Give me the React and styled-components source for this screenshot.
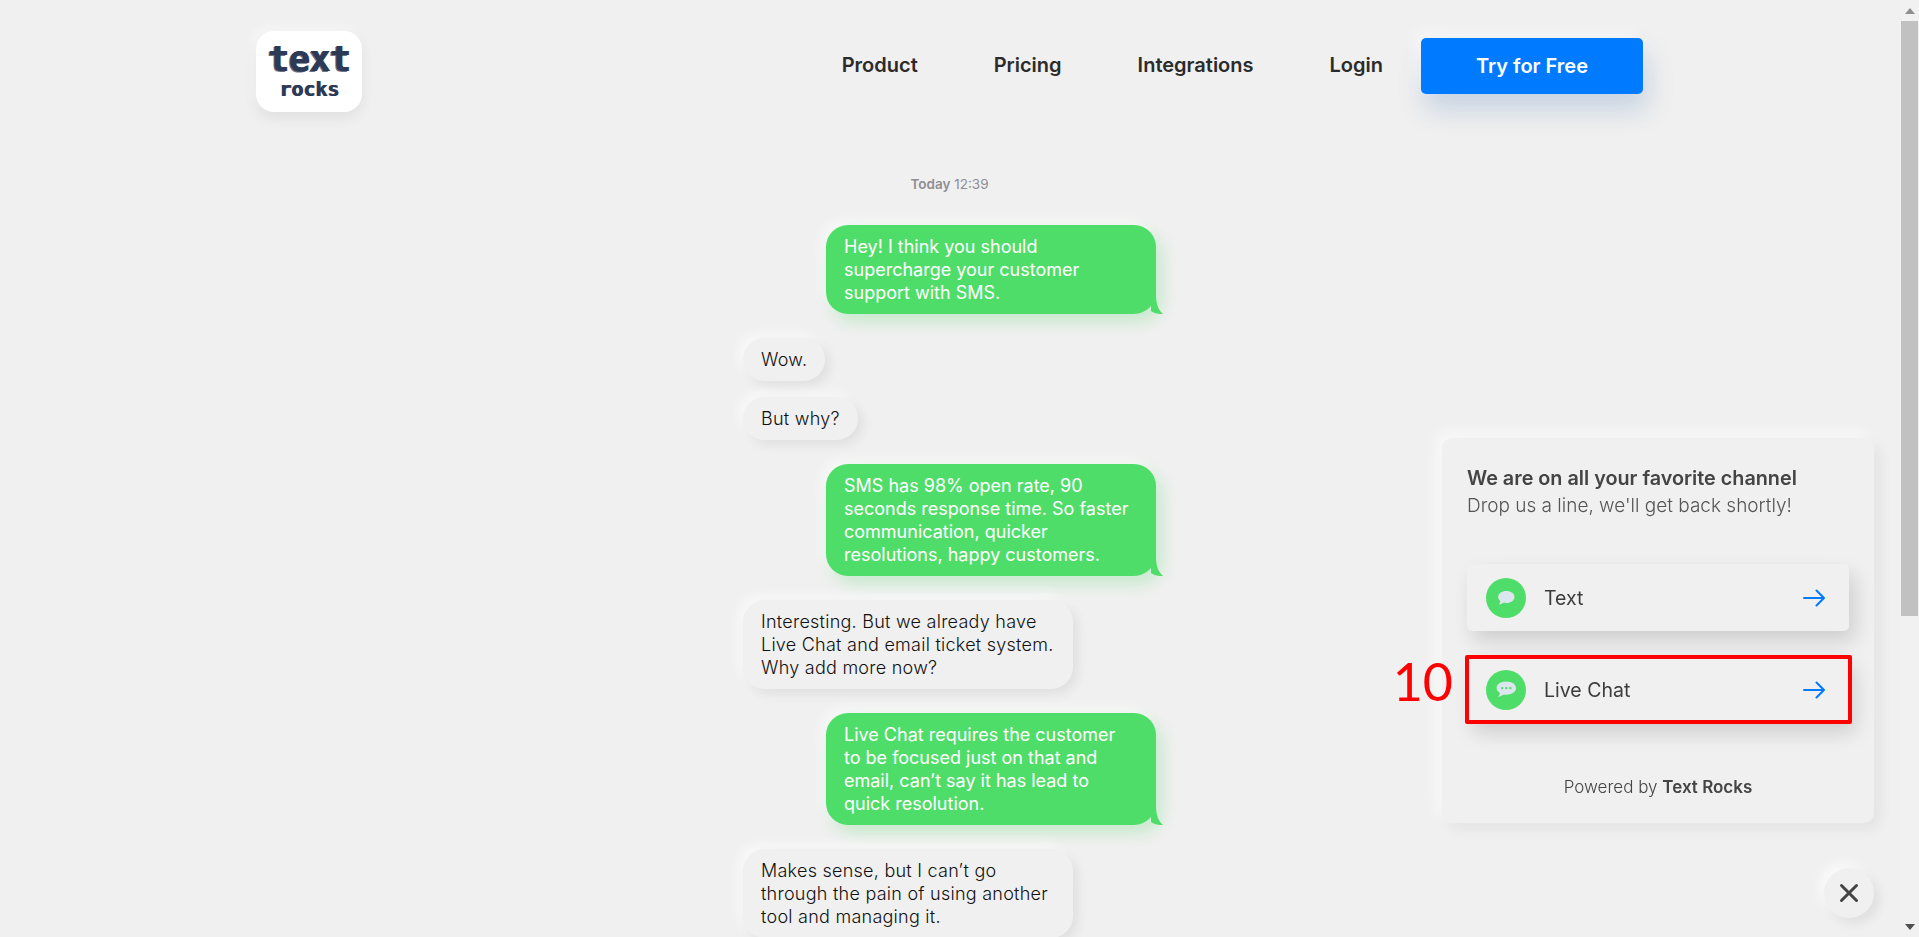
import React from 'react';
import styled, { createGlobalStyle } from 'styled-components';

const GlobalStyle = createGlobalStyle`
    html, body {
        margin: 0;
        height: 100%;
        overflow: hidden;
        background: #f0f0f0;
    }
    body {
        font-family: Inter, "Liberation Sans", sans-serif;
        color: #2b2b2b;
    }
    * { box-sizing: border-box; }
`;

const Frame = styled.div`
    display: flex;
    width: 1919px;
    height: 937px;
    overflow: hidden;
    background: #f0f0f0;
`;

const Page = styled.div`
    flex: 1;
    min-width: 0;
    height: 937px;
    overflow: hidden;
`;

const Header = styled.header`
    display: flex;
    justify-content: space-between;
    align-items: flex-start;
    width: 1387px;
    margin-left: 256px;
    padding-top: 31px;
`;

const Logo = styled.div`
    width: 106px;
    height: 81px;
    background: #fff;
    border-radius: 18px;
    box-shadow: 0 6px 14px rgba(0, 0, 0, 0.07), -4px -4px 10px rgba(255, 255, 255, 0.5);
    display: flex;
    flex-direction: column;
    align-items: center;
    padding-top: 9px;
    color: #2d3a55;
    font-family: "DejaVu Sans Mono", monospace;
    font-weight: 700;
`;

const LogoTop = styled.span`
    font-size: 35px;
    line-height: 38px;
    letter-spacing: -0.5px;
    text-shadow: 1px 0 0 #2d3a55, -1px 1px 0 #6a7388;
`;

const LogoBottom = styled.span`
    font-size: 20px;
    line-height: 18px;
    margin-top: 2px;
    text-shadow: 1px 0 0 #2d3a55;
`;

const Nav = styled.nav`
    display: flex;
    align-items: center;
    margin-top: 7px;
`;

const NavLink = styled.a`
    padding: 0 38px;
    margin-bottom: 2px;
    font-size: 20px;
    font-weight: 600;
    color: #2b2b2b;
    line-height: 54px;
`;

const CtaButton = styled.button`
    width: 222px;
    height: 56px;
    border: 0;
    border-radius: 5px;
    background: #007bff;
    color: #fff;
    font-family: inherit;
    font-size: 20px;
    font-weight: 600;
    box-shadow: 4px 16px 28px rgba(0, 80, 160, 0.18), -6px -6px 14px rgba(255, 255, 255, 0.55);
`;

const Chat = styled.main`
    display: flex;
    flex-direction: column;
    width: 413px;
    margin: 62px 0 0 743px;
`;

const Stamp = styled.div`
    text-align: center;
    font-size: 13.5px;
    line-height: 20px;
    color: #8e8e93;
    margin-bottom: 7px;
    b { font-weight: 600; }
`;

const Bubble = styled.div`
    position: relative;
    max-width: 330px;
    padding: ${props => props.$mine ? '10px 24px 10px 18px' : '10px 18px'};
    font-size: 18px;
    letter-spacing: ${props => props.$mine ? '0' : '0.25px'};
    line-height: 23px;
    border-radius: 22px;
    margin-top: ${props => props.$tight ? '16px' : '24px'};
    align-self: ${props => props.$mine ? 'flex-end' : 'flex-start'};
    width: ${props => props.$mine ? '330px' : 'auto'};
    background: ${props => props.$mine ? '#4fdd69' : '#f0f0f0'};
    color: ${props => props.$mine ? '#fff' : '#111'};
    font-weight: ${props => props.$mine ? 400 : 300};
    box-shadow: ${props => props.$mine
        ? '6px 8px 16px rgba(76, 217, 100, 0.26), -5px -5px 12px rgba(255, 255, 255, 0.6)'
        : '5px 5px 12px rgba(0, 0, 0, 0.07), -5px -5px 12px rgba(255, 255, 255, 0.6)'};
`;

const Tail = styled.svg`
    position: absolute;
    right: -7px;
    bottom: 0;
    width: 12px;
    height: 22px;
`;

const Widget = styled.aside`
    position: fixed;
    right: 45px;
    bottom: 114px;
    width: 432px;
    height: 385px;
    padding: 27px 25px 0;
    background: #f0f0f0;
    border-radius: 10px;
    box-shadow: 6px 6px 14px rgba(0, 0, 0, 0.06), -6px -6px 14px rgba(255, 255, 255, 0.6);
    display: flex;
    flex-direction: column;
`;

const WidgetTitle = styled.div`
    font-size: 19.8px;
    font-weight: 600;
    line-height: 26px;
    color: #444;
`;

const WidgetSub = styled.div`
    font-size: 19px;
    font-weight: 300;
    line-height: 30px;
    color: #555;
    margin-bottom: 43px;
`;

const ChannelList = styled.div`
    display: flex;
    flex-direction: column;
    gap: 25px;
`;

const ChannelRow = styled.div`
    position: relative;
    display: flex;
    align-items: center;
    width: 382px;
    height: 67px;
    padding: 0 24px 0 19px;
    border-radius: 5px;
    background: #f0f0f0;
    box-shadow: 6px 10px 20px rgba(0, 0, 0, 0.14);
    font-size: 19.5px;
    color: #3c3c3c;
`;

const ChannelIcon = styled.span`
    flex: none;
    display: flex;
    align-items: center;
    justify-content: center;
    width: 40px;
    height: 40px;
    border-radius: 50%;
    background: #4fdd69;
    margin-right: 18px;
`;

const ChannelName = styled.span`
    flex: 1;
`;

const Marker = styled.div`
    position: absolute;
    left: -2px;
    right: -3px;
    top: -1px;
    bottom: -1px;
    border: 4px solid #ff0000;
    border-radius: 2px;
    pointer-events: none;
`;

const MarkerNumber = styled.span`
    position: absolute;
    right: 396px;
    top: -10px;
    font-family: Lato, sans-serif;
    font-size: 52px;
    line-height: 70px;
    color: #ff0000;
`;

const PoweredBy = styled.div`
    margin-top: 52px;
    text-align: center;
    font-size: 17px;
    font-weight: 300;
    line-height: 24px;
    color: #444;
    b { font-weight: 600; }
`;

const CloseButton = styled.button`
    position: fixed;
    right: 45px;
    bottom: 19px;
    width: 50px;
    height: 50px;
    padding: 0;
    border: 0;
    border-radius: 50%;
    background: #f0f0f0;
    display: flex;
    align-items: center;
    justify-content: center;
    box-shadow: 5px 5px 12px rgba(0, 0, 0, 0.08), -5px -5px 12px rgba(255, 255, 255, 0.7);
`;

const Scrollbar = styled.div`
    flex: none;
    width: 18px;
    height: 937px;
    padding-right: 1px;
    background: #f1f1f1;
    display: flex;
    flex-direction: column;
    align-items: stretch;
`;

const ScrollArrow = styled.div`
    height: 21px;
    display: flex;
    align-items: center;
    justify-content: center;
    padding-left: 1px;
    flex: none;
`;

const ScrollThumb = styled.div`
    height: 595px;
    background: #c1c1c1;
`;

const ScrollRest = styled.div`
    flex: 1;
`;

const Arrow = () => (
    <svg width="22" height="22" viewBox="0 0 22 22" fill="none" stroke="#007bff" strokeWidth="2" strokeLinecap="round" strokeLinejoin="round">
        <path d="M1 11h20M13.500 3.500l7.500 7.500-7.500 7.500" />
    </svg>
);

const TextIcon = () => (
    <svg width="20" height="20" viewBox="0 0 20 20">
        <path fill="#dce6ee" d="M10.3 3C14.9 3 18.5 5.5 18.5 8.9c0 3.4-3.6 6-8.2 6-.9 0-1.7-.1-2.5-.3-1.3 1-3 1.8-5.2 2 .9-.8 1.6-2.1 1.8-3.6C3 11.9 2.2 10.500 2.200 8.900 2.200 5.500 5.700 3 10.300 3z" />
    </svg>
);

const ChatIcon = () => (
    <svg width="22" height="22" viewBox="0 0 22 22">
        <path fill="#dce6ee" d="M11.300 2.500C16.600 2.500 21 5.300 21 9.100c0 3.800-4.400 6.700-9.700 6.700-.9 0-1.800-.1-2.600-.3-1.400 1.200-3.400 2.200-5.800 2.400 1-.9 1.800-2.300 2-4C2.800 12.700 1.600 11 1.600 9.100 1.600 5.300 6 2.500 11.300 2.500z" />
        <circle cx="7.200" cy="9.100" r="1.200" fill="#4fdd69" />
        <circle cx="11.300" cy="9.100" r="1.200" fill="#4fdd69" />
        <circle cx="15.400" cy="9.100" r="1.200" fill="#4fdd69" />
    </svg>
);

const messages = [
    { mine: true, text: 'Hey! I think you should supercharge your customer support with SMS.' },
    { text: 'Wow.' },
    { text: 'But why?', tight: true },
    { mine: true, text: 'SMS has 98% open rate, 90 seconds response time. So faster communication, quicker resolutions, happy customers.' },
    { text: 'Interesting. But we already have Live Chat and email ticket system. Why add more now?' },
    { mine: true, text: 'Live Chat requires the customer to be focused just on that and email, can\u2019t say it has lead to quick resolution.' },
    { text: 'Makes sense, but I can\u2019t go through the pain of using another tool and managing it.' },
];

const App = () => (
    <Frame>
        <GlobalStyle />
        <Page>
            <Header>
                <Logo>
                    <LogoTop>text</LogoTop>
                    <LogoBottom>rocks</LogoBottom>
                </Logo>
                <Nav>
                    <NavLink>Product</NavLink>
                    <NavLink>Pricing</NavLink>
                    <NavLink>Integrations</NavLink>
                    <NavLink>Login</NavLink>
                    <CtaButton>Try for Free</CtaButton>
                </Nav>
            </Header>
            <Chat>
                <Stamp><b>Today</b> 12:39</Stamp>
                {messages.map((m) => (
                    <Bubble key={m.text} $mine={m.mine} $tight={m.tight}>
                        {m.text}
                        {m.mine && (
                            <Tail viewBox="0 0 12 22">
                                <path fill="#4fdd69" d="M0 0h5c-.2 8 .6 17 7 21.700C8 22.300 3.500 21.500 0 19z" />
                            </Tail>
                        )}
                    </Bubble>
                ))}
            </Chat>
        </Page>
        <Scrollbar>
            <ScrollArrow>
                <svg width="10" height="6" viewBox="0 0 10 6"><path fill="#8f8f8f" d="M5 0l5 6H0z" /></svg>
            </ScrollArrow>
            <ScrollThumb />
            <ScrollRest />
            <ScrollArrow>
                <svg width="10" height="6" viewBox="0 0 10 6"><path fill="#505050" d="M0 0h10L5 6z" /></svg>
            </ScrollArrow>
        </Scrollbar>
        <Widget>
            <WidgetTitle>We are on all your favorite channel</WidgetTitle>
            <WidgetSub>Drop us a line, we'll get back shortly!</WidgetSub>
            <ChannelList>
                <ChannelRow>
                    <ChannelIcon><TextIcon /></ChannelIcon>
                    <ChannelName>Text</ChannelName>
                    <Arrow />
                </ChannelRow>
                <ChannelRow>
                    <ChannelIcon><ChatIcon /></ChannelIcon>
                    <ChannelName>Live Chat</ChannelName>
                    <Arrow />
                    <Marker />
                    <MarkerNumber>10</MarkerNumber>
                </ChannelRow>
            </ChannelList>
            <PoweredBy>Powered by <b>Text Rocks</b></PoweredBy>
        </Widget>
        <CloseButton aria-label="Close">
            <svg width="20" height="20" viewBox="0 0 20 20" fill="none" stroke="#444" strokeWidth="3" strokeLinecap="round">
                <path d="M2.500 2.500l15 15M17.500 2.500l-15 15" />
            </svg>
        </CloseButton>
    </Frame>
);

export default App;
